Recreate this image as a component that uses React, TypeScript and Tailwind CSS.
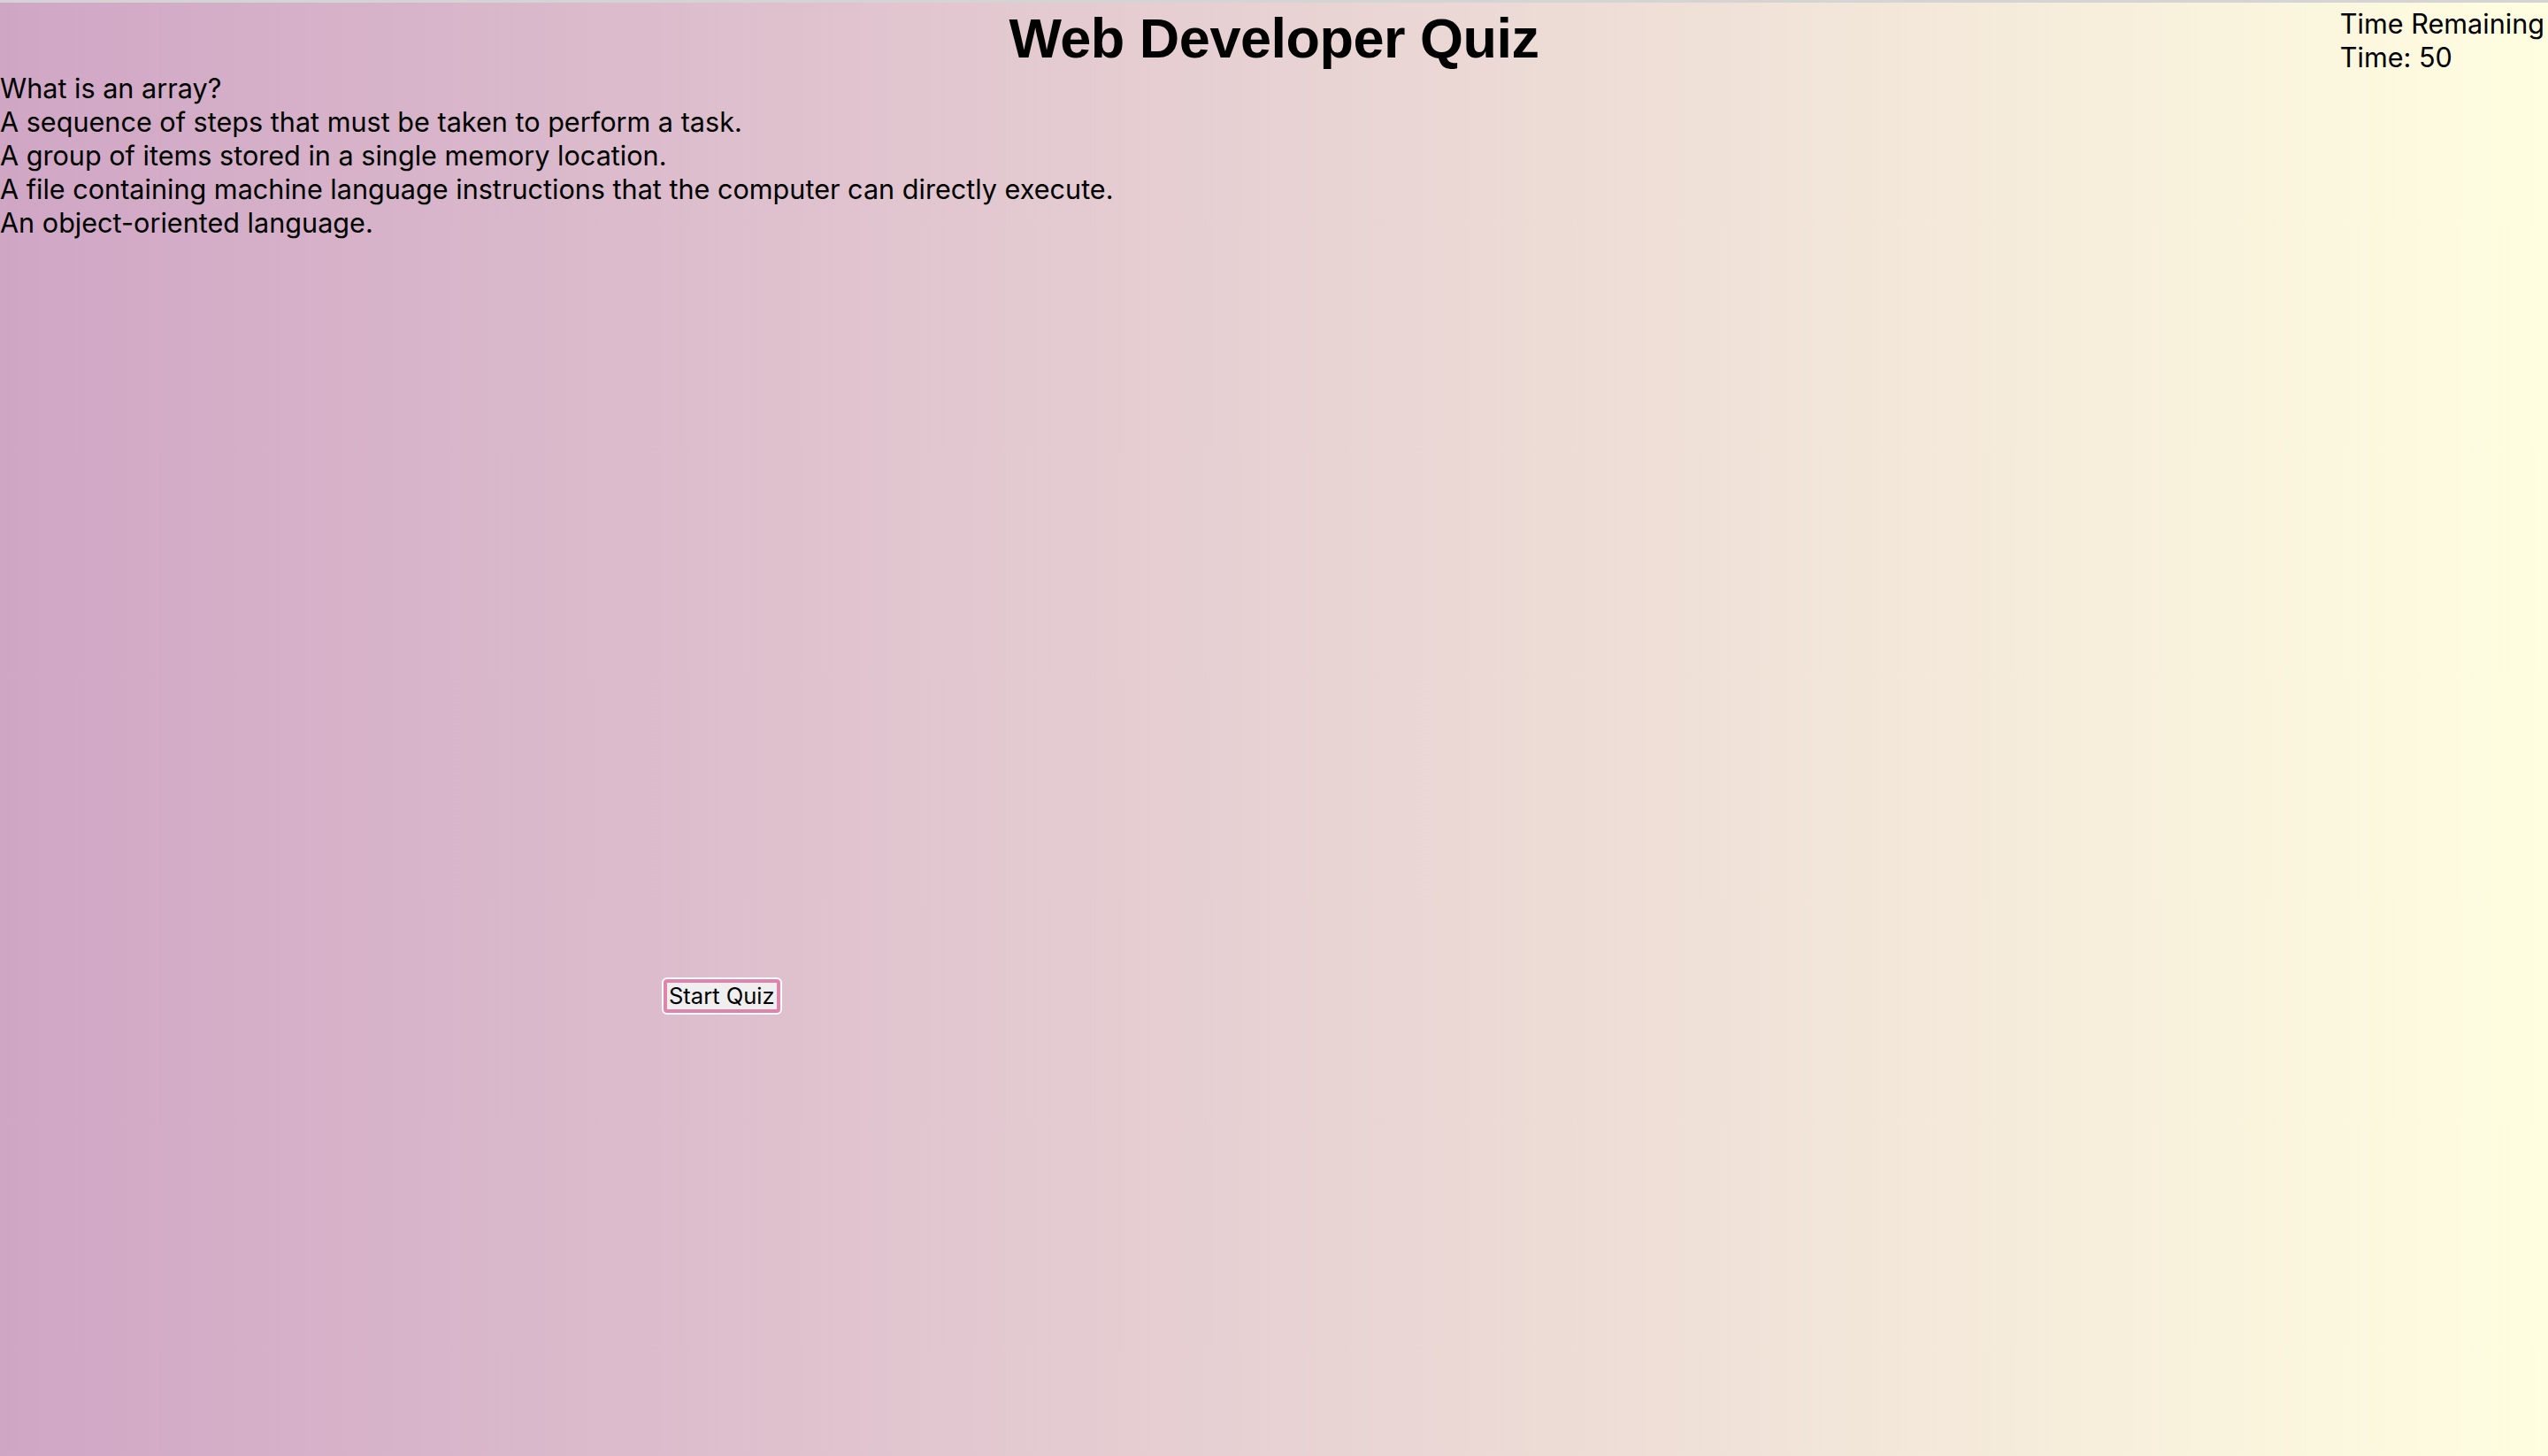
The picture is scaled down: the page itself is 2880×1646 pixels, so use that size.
export default function App() {
  const answers = [
    "A sequence of steps that must be taken to perform a task.",
    "A group of items stored in a single memory location.",
    "A file containing machine language instructions that the computer can directly execute.",
    "An object-oriented language.",
  ];
  return (
    <div
      className="min-h-[1646px] w-full border-t-[3px] border-[#d4d4d4] bg-gradient-to-r from-[#d0a6c5] to-[#fffee0] text-black"
      style={{ fontFamily: "Inter, 'Noto Sans', sans-serif" }}
    >
      <header className="grid h-[78px] grid-cols-[1fr_auto_1fr]">
        <div />
        <h1
          className="mt-[5px] text-[63px] font-bold leading-[70px] tracking-[-0.5px]"
          style={{ fontFamily: "'Liberation Sans', Arial, sans-serif" }}
        >
          Web Developer Quiz
        </h1>
        <div className="justify-self-end pt-[5px] pr-[4px] text-[30.6px] leading-[38px]">
          <div>Time Remaining</div>
          <div>Time: 50</div>
        </div>
      </header>
      <div className="text-[30.6px] leading-[38px]">
        <div>What is an array?</div>
        {answers.map((a) => (
          <div key={a}>{a}</div>
        ))}
      </div>
      <div className="mt-[834px] pl-[748px]">
        <button className="rounded-[6px] border-[2px] border-white bg-white p-0">
          <span className="block rounded-[4px] border-[4px] border-[#e283ae] bg-[#efefef] px-[2px] text-[25.5px] leading-[30px]">
            Start Quiz
          </span>
        </button>
      </div>
    </div>
  );
}
